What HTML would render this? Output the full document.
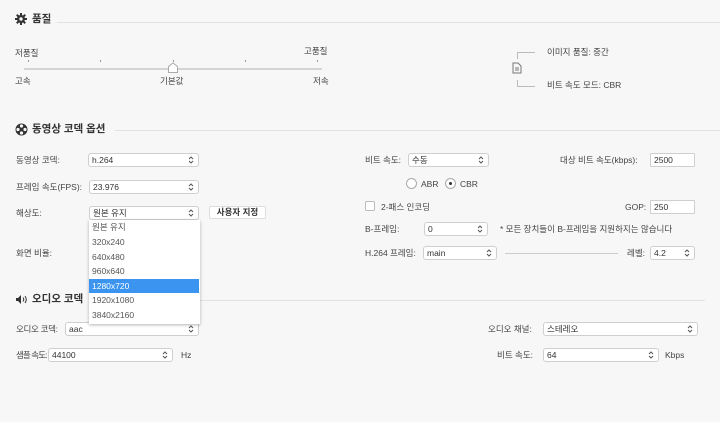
<!DOCTYPE html>
<html><head><meta charset="utf-8">
<style>
*{margin:0;padding:0;box-sizing:border-box}
body{width:720px;height:422px;background:#f7f7f7;font-family:"Liberation Sans","Noto Sans CJK KR",sans-serif;font-size:8.5px;color:#444;position:relative;overflow:hidden}
.a{position:absolute;white-space:nowrap;line-height:11px}
.h{font-weight:bold;font-size:10.5px;color:#333}
.ln{position:absolute;height:1px;background:#e2e2e2}
.sel{position:absolute;height:14px;background:#fff;border:1px solid #cfcfcf;border-radius:3px;padding-left:3px;line-height:12px;color:#333}
.ar{position:absolute;right:4px;top:2px;width:6px;height:8px}
.tick{position:absolute;top:60px;width:1px;height:2px;background:#999}
.it{position:absolute;left:0;width:110px;height:14.5px;line-height:14.5px;padding-left:3px;color:#555;font-size:8.5px}
</style></head><body>
<svg width="0" height="0" style="position:absolute"><defs><symbol id="ud" viewBox="0 0 6 8"><path d="M1 3L3 1L5 3M1 5L3 7L5 5" fill="none" stroke="#555" stroke-width="1"/></symbol></defs></svg>
<svg class="a" style="left:15px;top:13px" width="12" height="12" viewBox="0 0 12 12"><g fill="#333"><circle cx="6" cy="6" r="4"/><rect x="5" y="0" width="2" height="12"/><rect x="0" y="5" width="12" height="2"/><rect x="5" y="0" width="2" height="12" transform="rotate(45 6 6)"/><rect x="5" y="0" width="2" height="12" transform="rotate(-45 6 6)"/></g><circle cx="6" cy="6" r="1.7" fill="#f7f7f7"/></svg>
<div class="a h" style="left:32px;top:14px">품질</div>
<div class="ln" style="left:57px;top:22px;width:663px"></div>
<div class="a" style="left:15px;top:48px">저품질</div>
<div class="a" style="left:304px;top:46px">고품질</div>
<div class="tick" style="left:28px"></div><div class="tick" style="left:100px"></div><div class="tick" style="left:173px"></div><div class="tick" style="left:245px"></div><div class="tick" style="left:317px"></div>
<div class="ln" style="left:24px;top:68px;width:298px;background:#d4d4d4;height:2px"></div>
<svg class="a" style="left:167px;top:62px" width="12" height="12" viewBox="0 0 12 12"><path d="M1.5 4.5 L6 1 L10.5 4.5 V10.5 H1.5Z" fill="#fff" stroke="#aaa"/></svg>
<div class="a" style="left:15px;top:76px">고속</div>
<div class="a" style="left:160px;top:76px">기본값</div>
<div class="a" style="left:313px;top:76px">저속</div>
<div class="ln" style="left:517px;top:52px;width:1px;height:7px;background:#bbb"></div>
<div class="ln" style="left:517px;top:52px;width:18px;background:#bbb"></div>
<div class="ln" style="left:517px;top:80px;width:1px;height:7px;background:#bbb"></div>
<div class="ln" style="left:517px;top:86px;width:18px;background:#bbb"></div>
<svg class="a" style="left:512px;top:62px" width="10" height="12" viewBox="0 0 10 12"><path d="M1 1H6L9 4V11H1Z" fill="none" stroke="#777"/><path d="M3 6H7M3 8H7" stroke="#777"/></svg>
<div class="a" style="left:547px;top:47px">이미지 품질: 중간</div>
<div class="a" style="left:547px;top:80px">비트 속도 모드: CBR</div>
<svg class="a" style="left:15px;top:123px" width="13" height="13" viewBox="0 0 13 13"><circle cx="6.5" cy="6.5" r="6" fill="#333"/><g fill="#f7f7f7"><circle cx="6.5" cy="3" r="1.6"/><circle cx="6.5" cy="10" r="1.6"/><circle cx="3" cy="6.5" r="1.6"/><circle cx="10" cy="6.5" r="1.6"/></g></svg>
<div class="a h" style="left:32px;top:124px">동영상 코덱 옵션</div>
<div class="ln" style="left:115px;top:130px;width:605px"></div>
<div class="a" style="left:16px;top:155px">동영상 코덱:</div>
<div class="sel" style="left:88px;top:153px;width:111px">h.264<svg class="ar"><use href="#ud"/></svg></div>
<div class="a" style="left:16px;top:182px">프레임 속도(FPS):</div>
<div class="sel" style="left:89px;top:180px;width:110px">23.976<svg class="ar"><use href="#ud"/></svg></div>
<div class="a" style="left:16px;top:208px">해상도:</div>
<div class="sel" style="left:89px;top:206px;width:110px">원본 유지<svg class="ar"><use href="#ud"/></svg></div>
<div class="a" style="left:209px;top:206px;width:57px;height:13px;background:#fff;border:1px solid #ddd;border-radius:2px;font-weight:bold;text-align:center;line-height:11px;color:#333">사용자 지정</div>
<div class="a" style="left:16px;top:248px">화면 비율:</div>
<div class="sel" style="left:89px;top:246px;width:110px"></div>
<div class="a" style="left:365px;top:155px">비트 속도:</div>
<div class="sel" style="left:408px;top:153px;width:81px">수동<svg class="ar"><use href="#ud"/></svg></div>
<div class="a" style="left:560px;top:155px">대상 비트 속도(kbps):</div>
<div class="sel" style="left:650px;top:153px;width:45px;border-radius:1px">2500</div>
<div class="a" style="left:406px;top:178px;width:11px;height:11px;border:1px solid #aaa;border-radius:50%;background:#fff"></div>
<div class="a" style="left:421px;top:179px">ABR</div>
<div class="a" style="left:445px;top:178px;width:11px;height:11px;border:1px solid #aaa;border-radius:50%;background:#fff"><div style="position:absolute;left:3px;top:3px;width:3px;height:3px;border-radius:50%;background:#333"></div></div>
<div class="a" style="left:460px;top:179px">CBR</div>
<div class="a" style="left:365px;top:201px;width:10px;height:10px;border:1px solid #bbb;border-radius:2px;background:#fff"></div>
<div class="a" style="left:381px;top:202px">2-패스 인코딩</div>
<div class="a" style="left:625px;top:202px">GOP:</div>
<div class="sel" style="left:650px;top:200px;width:45px;border-radius:1px">250</div>
<div class="a" style="left:365px;top:224px">B-프레임:</div>
<div class="sel" style="left:424px;top:222px;width:64px">0<svg class="ar"><use href="#ud"/></svg></div>
<div class="a" style="left:500px;top:224px">* 모든 장치들이 B-프레임을 지원하지는 않습니다</div>
<div class="a" style="left:365px;top:248px">H.264 프레임:</div>
<div class="sel" style="left:423px;top:246px;width:74px">main<svg class="ar"><use href="#ud"/></svg></div>
<div class="ln" style="left:505px;top:253px;width:113px;background:#ccc"></div>
<div class="a" style="left:627px;top:248px">레벨:</div>
<div class="sel" style="left:650px;top:246px;width:45px">4.2<svg class="ar"><use href="#ud"/></svg></div>
<svg class="a" style="left:15px;top:294px" width="13" height="11" viewBox="0 0 13 11"><path d="M1 4H3L6 1V10L3 7H1Z" fill="#333"/><path d="M8 3.5Q9.5 5.5 8 7.5M10 2Q12.5 5.5 10 9" stroke="#333" fill="none"/></svg>
<div class="a h" style="left:32px;top:294px">오디오 코덱</div>
<div class="ln" style="left:140px;top:300px;width:565px"></div>
<div class="a" style="left:16px;top:324px;letter-spacing:-0.3px">오디오 코덱:</div>
<div class="sel" style="left:65px;top:322px;width:134px">aac<svg class="ar"><use href="#ud"/></svg></div>
<div class="a" style="left:16px;top:350px;letter-spacing:-0.9px">샘플 속도:</div>
<div class="sel" style="left:48px;top:348px;width:125px">44100<svg class="ar"><use href="#ud"/></svg></div>
<div class="a" style="left:181px;top:350px">Hz</div>
<div class="a" style="left:488px;top:324px">오디오 채널:</div>
<div class="sel" style="left:543px;top:322px;width:155px">스테레오<svg class="ar"><use href="#ud"/></svg></div>
<div class="a" style="left:497px;top:350px">비트 속도:</div>
<div class="sel" style="left:543px;top:348px;width:116px">64<svg class="ar"><use href="#ud"/></svg></div>
<div class="a" style="left:665px;top:350px">Kbps</div>
<div class="a" style="left:89px;top:220px;width:111px;height:104px;background:#fff;box-shadow:0 1px 3px rgba(0,0,0,.3)">
<div class="it" style="top:0">원본 유지</div>
<div class="it" style="top:15px">320x240</div>
<div class="it" style="top:29.5px">640x480</div>
<div class="it" style="top:44px">960x640</div>
<div class="it" style="top:58.5px;background:#3b94f0;color:#fff">1280x720</div>
<div class="it" style="top:73px">1920x1080</div>
<div class="it" style="top:87.5px">3840x2160</div>
</div>
</body></html>
